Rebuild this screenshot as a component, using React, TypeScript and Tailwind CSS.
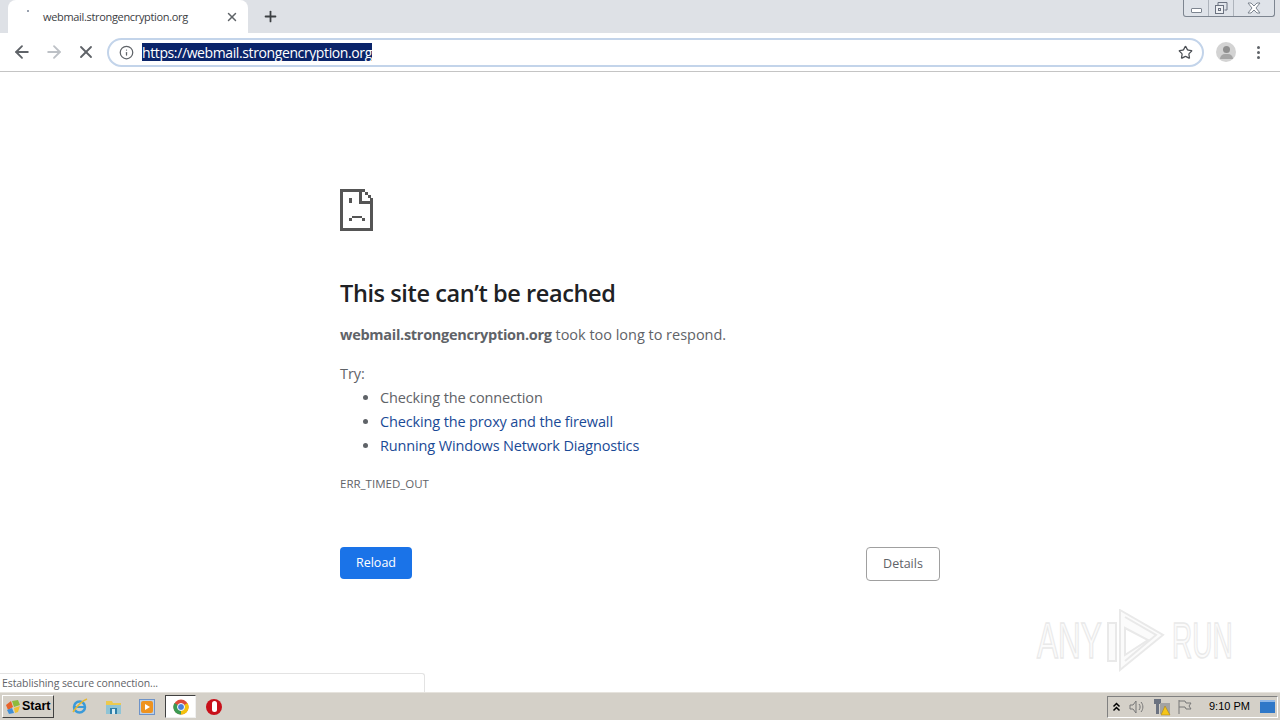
import { ArrowLeft, ArrowRight, X, Plus, Info, Star } from 'lucide-react';

const ui = { fontFamily: '"Open Sans", "Noto Sans", sans-serif' };

function SadPage() {
  // pixel drawing of the chrome error page
  return (
    <svg width="33" height="42" viewBox="0 0 33 42" shapeRendering="crispEdges" fill="#555" className="block">
      <path d="M0 0h25v3h-22v36h27v-24h3v27h-33z" />
      <path d="M19 0h3v12h11v3h-14z" />
      <rect x="25" y="3" width="3" height="3" />
      <rect x="28" y="6" width="3" height="3" />
      <rect x="30" y="9" width="3" height="3" />
      <rect x="9" y="9" width="3" height="5" />
      <rect x="12" y="27" width="10" height="2" />
      <rect x="9" y="29" width="3" height="3" />
      <rect x="22" y="29" width="3" height="3" />
    </svg>
  );
}

function TabBar() {
  return (
    <div className="h-[33px] bg-[#dee1e6] flex items-end pl-2 relative">
      <div className="w-[240px] h-[33px] bg-white rounded-t-lg flex items-center pl-[19px] pr-[9px]">
        <div className="w-[2px] h-[2px] bg-gray-400 mb-[11px]" />
        <span className="ml-[14px] pt-[1px] flex-1 text-[11px] text-[#3c4043] tracking-[-0.33px]" style={ui}>webmail.strongencryption.org</span>
        <X size={14} strokeWidth={2.5} className="text-[#5f6368]" />
      </div>
      <Plus size={17} strokeWidth={2.5} className="text-[#3c4043] ml-[14px] mb-[8px]" />
      <WindowButtons />
    </div>
  );
}

function WindowButtons() {
  return (
    <div className="absolute top-0 right-[5px] w-[92px] h-[17px] border border-t-0 border-[#7d8590] rounded-b-[3px] bg-[#dfe3e9] flex">
      <div className="w-[25px] flex items-center justify-center border-r border-[#aeb4bc]">
        <div className="w-[11px] h-[5px] mt-[4px] border border-[#7d8590] rounded-[1px] bg-white" />
      </div>
      <div className="w-[25px] flex items-center justify-center border-r border-[#aeb4bc]">
        <svg width="14" height="13" viewBox="0 0 14 13" fill="none" stroke="#6b7280">
          <path d="M4 3V.5h9V8h-2.500" />
          <rect x="1.500" y="3.500" width="8" height="8" fill="#eef0f3" />
          <rect x="4.500" y="6.500" width="2" height="2" />
        </svg>
      </div>
      <div className="flex-1 flex items-center justify-center">
        <svg width="14" height="12" viewBox="0 0 14 12" fill="#fff" stroke="#7d8590">
          <path d="M1 1h3l3 3 3-3h3L9 6l4 5h-3L7 8l-3 3H1l4-5z" />
        </svg>
      </div>
    </div>
  );
}

function Toolbar() {
  return (
    <div className="h-[39px] bg-white border-b border-[#c4c4c4] flex items-center relative">
      <div className="w-[107px] flex items-center shrink-0 pl-[12px]">
        <ArrowLeft size={20} strokeWidth={2.2} className="text-[#5f6368]" />
        <ArrowRight size={20} strokeWidth={2.2} className="text-[#bdc1c6] ml-[12px]" />
        <X size={20} strokeWidth={2.2} className="text-[#5f6368] ml-[12px]" />
      </div>
      <div className="w-[1097px] h-[29px] border-2 border-[#c3d4ea] rounded-full flex items-center pl-[10px] pr-[9px] bg-white">
        <Info size={15} strokeWidth={2} className="text-[#5f6368]" />
        <span className="ml-[8px] h-[18px] flex items-center bg-[#0a246a] text-white text-[14px] tracking-[-0.39px]" style={ui}>https://webmail.strongencryption.org</span>
        <div className="flex-1" />
        <Star size={15} strokeWidth={2} className="text-[#4b4f54]" />
      </div>
      <div className="ml-[12px] w-[20px] h-[20px] rounded-full bg-[#d3d3d3] flex flex-col items-center justify-center overflow-hidden">
        <div className="w-[7px] h-[7px] rounded-full bg-[#8f8f8f]" />
        <div className="w-[13px] h-[5px] mt-[1px] rounded-t-full bg-[#a5a5a5]" />
      </div>
      <div className="ml-[21px] flex flex-col gap-[2px]">
        <div className="w-[3px] h-[3px] bg-[#5f6368] rounded-full" />
        <div className="w-[3px] h-[3px] bg-[#5f6368] rounded-full" />
        <div className="w-[3px] h-[3px] bg-[#5f6368] rounded-full" />
      </div>
    </div>
  );
}

function ErrorPage() {
  return (
    <div className="flex-1 bg-white pl-[340px] pt-[117px] relative" style={ui}>
      <div className="w-[600px]">
        <SadPage />
        <h1 className="mt-[46px] text-[23.500px] leading-[32px] font-semibold text-[#202124] tracking-[-0.4px]">This site can’t be reached</h1>
        <p className="mt-[14px] text-[14.500px] leading-[24px] text-[#5f6368] tracking-[-0.02px]">
          <b className="font-bold tracking-[-0.28px]">webmail.strongencryption.org</b> took too long to respond.
        </p>
        <p className="mt-[15px] text-[14.500px] leading-[24px] text-[#5f6368] tracking-[-0.1px]">Try:</p>
        <ul className="list-disc pl-[40px] text-[14.500px] leading-[24px] text-[#5f6368] tracking-[-0.14px]">
          <li>Checking the connection</li>
          <li><a className="text-[#1a4a96]">Checking the proxy and the firewall</a></li>
          <li><a className="text-[#1a4a96]">Running Windows Network Diagnostics</a></li>
        </ul>
        <div className="mt-[18px] text-[11.500px] leading-[16px] text-[#5f6368] tracking-[0px]">ERR_TIMED_OUT</div>
        <div className="mt-[55px] flex items-start justify-between">
          <button className="w-[72px] h-[32px] pt-[1px] rounded-[4px] bg-[#1a73e8] text-white text-[12.500px]">Reload</button>
          <button className="w-[74px] h-[34px] pt-[1px] rounded-[4px] border border-[#a0a0a0] bg-white text-[#5f6368] text-[12.500px]">Details</button>
        </div>
      </div>
      <Watermark />
      <div className="absolute left-0 bottom-0 w-[425px] h-[19px] bg-white border border-b-0 border-l-0 border-[#e3e3e3] rounded-tr-[3px] pl-[2px] text-[10.500px] leading-[19px] text-[#5f6368] tracking-[-0.09px]">
        Establishing secure connection...
      </div>
    </div>
  );
}

function Watermark() {
  return (
    <div className="absolute left-[1037px] top-[537px] w-[196px] h-[64px] flex items-center" style={{ fontFamily: '"Liberation Sans", sans-serif' }}>
      <span className="text-[50px] leading-[50px] text-[#fbfbfb] [-webkit-text-stroke:1.500px_#e9e9e9] scale-x-[0.63] origin-left w-[65px] shrink-0">ANY</span>
      <svg width="60" height="64" viewBox="0 0 60 64" fill="none" stroke="#e9e9e9" strokeWidth="2" className="ml-[4px] shrink-0">
        <path d="M14 1 57 26 14 61Z" fill="#fbfbfb" />
        <path d="M19 19 42 31 19 46Z" fill="#fff" />
        <path d="M19 8 50 26 19 52" />
        <path d="M2 14V52H10V14Z" fill="#fbfbfb" />
      </svg>
      <span className="ml-[6px] text-[50px] leading-[50px] text-[#fbfbfb] [-webkit-text-stroke:1.500px_#e9e9e9] scale-x-[0.56] origin-left">RUN</span>
    </div>
  );
}

function Taskbar() {
  return (
    <div className="h-[28px] bg-[#d4d0c8] border-t border-[#e6e3dd] flex items-center relative" style={{ fontFamily: '"Liberation Sans", sans-serif' }}>
      <div className="ml-[2px] w-[52px] h-[23px] shrink-0 bg-[#d4d0c8] border border-t-white border-l-white border-r-[#404040] border-b-[#404040] flex items-center pl-[2px] gap-[1px]">
        <svg width="16" height="16" viewBox="0 0 16 16">
          <path d="M1 6 6 2 8 8 3 11z" fill="#e8632b" />
          <path d="M7 2 13 1 15 6 9 8z" fill="#8dbb3c" />
          <path d="M2 11 7 9 9 14 4 15z" fill="#3f8fd8" />
          <path d="M9 9 15 7 13 13 10 14z" fill="#f0c030" />
        </svg>
        <span className="text-[12.500px] font-bold text-black">Start</span>
      </div>
      <div className="ml-[17px] w-[17px] flex justify-center">
        <svg width="17" height="17" viewBox="0 0 17 17" fill="none">
          <circle cx="8.500" cy="9" r="5.500" stroke="#3a9ad9" strokeWidth="2.500" />
          <path d="M3 9h11" stroke="#3a9ad9" strokeWidth="2" />
          <path d="M2 14C6 8 11 3 16 1" stroke="#e8b830" strokeWidth="1.500" />
        </svg>
      </div>
      <div className="ml-[17px] w-[17px] shrink-0">
        <svg width="17" height="17" viewBox="0 0 17 17" className="block">
          <path d="M1 3h6l1 2h8v5H1z" fill="#ecc94f" />
          <path d="M1 7h15v9H1z" fill="#8fc4d6" />
          <path d="M5 10h7v6H5z" fill="#2f7fa8" />
          <path d="M7 11h3v5H7z" fill="#d9ecf2" />
        </svg>
      </div>
      <div className="ml-[17px] w-[16px] h-[16px] shrink-0 border border-[#6e93c8] bg-[#bcd0e8] flex items-center justify-center">
        <div className="w-[12px] h-[12px] rounded-[2px] bg-[#ee9320] flex items-center justify-center">
          <div className="w-0 h-0 border-y-[3.500px] border-y-transparent border-l-[5px] border-l-white" />
        </div>
      </div>
      <div className="ml-[10px] w-[31px] h-[23px] shrink-0 bg-white border border-t-[#404040] border-l-[#404040] border-r-[#f0f0f0] border-b-[#f0f0f0] flex items-center justify-center">
        <svg width="16" height="16" viewBox="0 0 16 16">
          <circle cx="8" cy="8" r="7.500" fill="#dd4b39" />
          <path d="M8 8 14.500 4A7.500 7.500 0 0 1 8 15.500z" fill="#f4c20d" />
          <path d="M8 8 8 15.500A7.500 7.500 0 0 1 1.500 4z" fill="#3c9a52" />
          <circle cx="8" cy="8" r="3.500" fill="#4a80d8" stroke="#fff" />
        </svg>
      </div>
      <div className="ml-[10px] w-[16px] h-[16px] shrink-0 rounded-full bg-[#c8101a] flex items-center justify-center">
        <div className="w-[5px] h-[11px] rounded-full bg-white" />
      </div>
      <div className="flex-1" />
      <div className="w-[171px] h-[22px] mr-[2px] shrink-0 border border-t-[#808080] border-l-[#808080] border-r-white border-b-white flex items-center pl-[4px]">
        <svg width="9" height="10" viewBox="0 0 9 10" fill="none" stroke="#000" strokeWidth="1.500" className="shrink-0">
          <path d="M1.500 4.500 4.500 1.500 7.500 4.500M1.500 8.500 4.500 5.500 7.500 8.500" />
        </svg>
        <svg width="16" height="16" viewBox="0 0 16 16" fill="none" stroke="#777" className="ml-[8px] shrink-0">
          <path d="M1 6h3l3-4v12l-3-4H1zM10 5c1.500 2 1.500 4 0 6M12 3c2.500 3 2.500 7 0 10" />
        </svg>
        <svg width="18" height="18" viewBox="0 0 18 18" className="ml-[8px] shrink-0">
          <path d="M1 1h7v5H6v10H3V6H1z" fill="#6b7280" />
          <path d="M7 5h10v11H7z" fill="#a3a3a3" />
          <path d="M12 8 17 17H8z" fill="#f5c518" stroke="#a07a10" strokeWidth=".5" />
        </svg>
        <svg width="16" height="16" viewBox="0 0 16 16" fill="none" stroke="#777" className="ml-[6px] shrink-0">
          <path d="M2 1v14M2 2h6l1 2h5l-2 3 2 3H9L8 8H2" />
        </svg>
        <span className="ml-[16px] whitespace-nowrap text-[11px] text-black shrink-0">9:10 PM</span>
        <div className="ml-[10px] w-[15px] h-[13px] shrink-0 bg-[#2f78c8] border-t-2 border-[#8fb8e8]" />
      </div>
    </div>
  );
}

export default function App() {
  return (
    <div className="w-[1280px] h-[720px] flex flex-col overflow-hidden bg-white">
      <TabBar />
      <Toolbar />
      <ErrorPage />
      <Taskbar />
    </div>
  );
}
